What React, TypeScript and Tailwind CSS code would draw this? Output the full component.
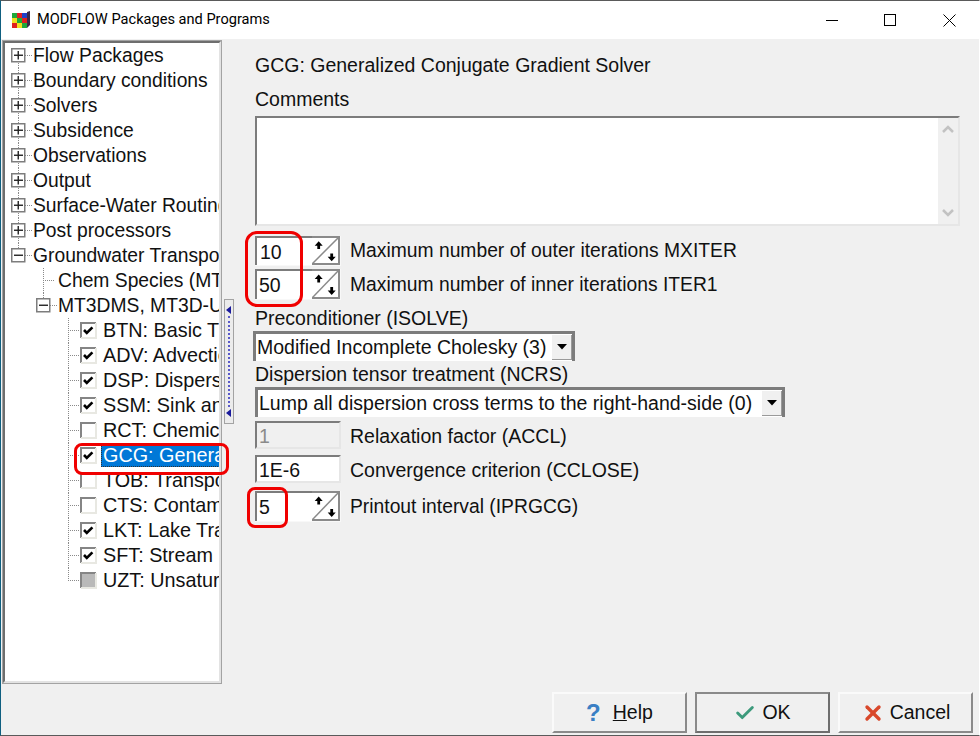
import { Check, X } from 'lucide-react';

type NodeKind = 'plus' | 'minus' | 'leaf';
type CheckState = 'on' | 'off' | 'grey';

const sunken =
    'border-t-2 border-l-2 border-r-2 border-b-2 border-t-[#7c7c7c] border-l-[#7c7c7c] border-r-[#e6e6e6] border-b-[#e6e6e6]';

const topRows: { label: string; kind: NodeKind }[] = [
    { label: 'Flow Packages', kind: 'plus' },
    { label: 'Boundary conditions', kind: 'plus' },
    { label: 'Solvers', kind: 'plus' },
    { label: 'Subsidence', kind: 'plus' },
    { label: 'Observations', kind: 'plus' },
    { label: 'Output', kind: 'plus' },
    { label: 'Surface-Water Routing', kind: 'plus' },
    { label: 'Post processors', kind: 'plus' },
    { label: 'Groundwater Transport', kind: 'minus' },
];

const packageRows: { label: string; state: CheckState; selected?: boolean }[] = [
    { label: 'BTN: Basic Transport', state: 'on' },
    { label: 'ADV: Advection', state: 'on' },
    { label: 'DSP: Dispersion', state: 'on' },
    { label: 'SSM: Sink and Source', state: 'on' },
    { label: 'RCT: Chemical Reactions', state: 'off' },
    { label: 'GCG: Generalized', state: 'on', selected: true },
    { label: 'TOB: Transport Observations', state: 'off' },
    { label: 'CTS: Contaminant', state: 'off' },
    { label: 'LKT: Lake Transport', state: 'on' },
    { label: 'SFT: Stream', state: 'on' },
    { label: 'UZT: Unsaturated Zone', state: 'grey' },
];

function Dots({ x1, y1, x2, y2 }: { x1: number; y1: number; x2: number; y2: number }) {
    return <line x1={x1} y1={y1} x2={x2} y2={y2} stroke="#8a8a8a" strokeWidth="1" strokeDasharray="1 1" />;
}

function ExpandBox({ x, minus }: { x: number; minus: boolean }) {
    return (
        <g>
            <rect x={x + 0.75} y={5.75} width={13} height={13} fill="#fff" stroke="#7d7d7d" strokeWidth="1.5" />
            <line x1={x + 3} y1={12.25} x2={x + 12} y2={12.25} stroke="#222" strokeWidth="1.4" />
            {!minus && <line x1={x + 7.25} y1={8} x2={x + 7.25} y2={16.5} stroke="#222" strokeWidth="1.4" />}
        </g>
    );
}

function TopGutter({ kind, index }: { kind: NodeKind; index: number }) {
    const last = index === topRows.length - 1;
    return (
        <svg width="28" height="25" className="shrink-0">
            <Dots x1={13.5} y1={index === 0 ? 12 : 0} x2={13.5} y2={last ? 6 : 25} />
            <Dots x1={20} y1={12.5} x2={27} y2={12.5} />
            <ExpandBox x={6} minus={kind === 'minus'} />
        </svg>
    );
}

function PackageGutter({ state, last }: { state: CheckState; last: boolean }) {
    return (
        <svg width="96" height="25" className="shrink-0">
            <Dots x1={63.5} y1={0} x2={63.5} y2={last ? 13 : 25} />
            <Dots x1={63} y1={12.5} x2={75} y2={12.5} />
            <path d="M76 20V5h15" fill="none" stroke="#858585" strokeWidth="2" />
            <path d="M91 5v15H76" fill="none" stroke="#e8e8e2" strokeWidth="2" />
            <rect x="77" y="6" width="13" height="13" fill={state === 'grey' ? '#b9b9b9' : '#fff'} />
            {state === 'on' && <path d="M79 12l2.8 3 5.6-5.6" fill="none" stroke="#000" strokeWidth="2.6" />}
        </svg>
    );
}

function Tree() {
    return (
        <div className="w-[220px] h-[644px] border border-[#a3a3a3] shrink-0">
            <div className="h-full border-t-2 border-l-2 border-r-2 border-b-2 border-t-[#6e6e6e] border-l-[#6e6e6e] border-r-[#e3e3e3] border-b-[#e3e3e3] bg-white overflow-hidden text-[19.3px] leading-[23px] text-[#111]">
                {topRows.map((row, i) => (
                    <div key={row.label} className="flex items-center h-[25px] whitespace-nowrap">
                        <TopGutter kind={row.kind} index={i} />
                        <span>{row.label}</span>
                    </div>
                ))}
                <div className="flex items-center h-[25px] whitespace-nowrap">
                    <svg width="53" height="25" className="shrink-0">
                        <Dots x1={38.5} y1={0} x2={38.5} y2={25} />
                        <Dots x1={38} y1={12.5} x2={50} y2={12.5} />
                    </svg>
                    <span>Chem Species (MT3D)</span>
                </div>
                <div className="flex items-center h-[25px] whitespace-nowrap">
                    <svg width="53" height="25" className="shrink-0">
                        <Dots x1={38.5} y1={0} x2={38.5} y2={6} />
                        <Dots x1={45} y1={12.5} x2={52} y2={12.5} />
                        <ExpandBox x={31} minus />
                    </svg>
                    <span>MT3DMS, MT3D-USGS</span>
                </div>
                {packageRows.map((row, i) => (
                    <div key={row.label} className="flex items-center h-[25px] whitespace-nowrap text-[19.8px]">
                        <PackageGutter state={row.state} last={i === packageRows.length - 1} />
                        {row.selected ? (
                            <span className="h-[23px] leading-[23px] px-[2px] bg-[#0078d7] text-white outline-1 outline-dotted outline-[#333] -outline-offset-1">
                                {row.label}
                            </span>
                        ) : (
                            <span className="px-[2px]">{row.label}</span>
                        )}
                    </div>
                ))}
            </div>
        </div>
    );
}

function Splitter() {
    return (
        <div className="ml-[2px] mt-[259px] w-[10px] h-[125px] border border-[#a3a3a3] bg-[#ececec] flex flex-col items-center justify-between py-[6px] shrink-0">
            <svg width="8" height="8"><path d="M6 0v8L1 4z" fill="#1a1a9c" /></svg>
            <div className="flex-1 my-[2px] border-l-2 border-dotted border-[#5a5acb]" />
            <svg width="8" height="8"><path d="M6 0v8L1 4z" fill="#1a1a9c" /></svg>
        </div>
    );
}

function SpinGlyph() {
    return (
        <svg width="28" height="100%" viewBox="0 0 28 30" preserveAspectRatio="none" className="shrink-0 h-full">
            <path d="M0 1h27v28H0" fill="none" stroke="#8a8a8a" strokeWidth="2" />
            <line x1="0" y1="29" x2="27" y2="1" stroke="#8a8a8a" strokeWidth="1.5" />
            <path d="M6.7 5.5l-4 4.5h2.6v3.5h2.8V10h2.6z" fill="#000" />
            <path d="M19.7 26l4-4.5h-2.6V18h-2.8v3.5h-2.6z" fill="#000" />
        </svg>
    );
}

function SpinRow({ value, label, height, pad }: { value: string; label: string; height: string; pad: string }) {
    return (
        <div className={`flex items-center ${height}`}>
            <div className="w-[86px] h-full flex bg-white border-r border-b border-[#f8f8f8]">
                <div className={`flex-1 border-t-2 border-l-2 border-[#7c7c7c] flex items-center text-[19.5px] ${pad}`}>{value}</div>
                <SpinGlyph />
            </div>
            <span className="ml-[9px] text-[19.3px]">{label}</span>
        </div>
    );
}

function Combo({ value, width, shift }: { value: string; width: string; shift: string }) {
    return (
        <div className={`flex h-[30px] bg-white border-t-[3px] border-l-[3px] border-r-[3px] border-t-[#7c7c7c] border-l-[#7c7c7c] border-r-[#7c7c7c] ${width} ${shift}`}>
            <div className="flex-1 pl-[1px] leading-[27px] whitespace-nowrap">{value}</div>
            <div className="w-[20px] h-[25px] mt-[1px] bg-[#f0f0f0] border-r border-b border-[#9a9a9a] flex items-center justify-center">
                <svg width="10" height="6"><path d="M0 0h10L5 5.5z" fill="#000" /></svg>
            </div>
        </div>
    );
}

function Field({ value, label, disabled }: { value: string; label: string; disabled?: boolean }) {
    return (
        <div className="flex items-center h-[28px]">
            <div
                className={`w-[86px] h-full pl-[2px] pt-px flex items-center ${sunken} ${disabled ? 'bg-[#f0f0f0] text-[#8a8a8a]' : 'bg-white'}`}
            >
                {value}
            </div>
            <span className="ml-[9px] pt-px">{label}</span>
        </div>
    );
}

function SolverPanel() {
    return (
        <div className="flex-1 pl-[21px] pt-[13px] text-[19.5px] leading-[22px] text-[#111] flex flex-col">
            <div className="h-[25px] leading-[25px]">GCG: Generalized Conjugate Gradient Solver</div>
            <div className="h-[25px] leading-[25px] mt-[9px]">Comments</div>
            <div className={`w-[705px] h-[110px] mt-[4px] bg-white flex justify-end ${sunken}`}>
                <div className="w-[20px] h-full bg-[#f0f0f0] flex flex-col items-center justify-between py-[7px]">
                    <svg width="12" height="8"><path d="M1 7l5-5 5 5" fill="none" stroke="#c2c2c2" strokeWidth="2.5" /></svg>
                    <svg width="12" height="8"><path d="M1 1l5 5 5-5" fill="none" stroke="#c2c2c2" strokeWidth="2.5" /></svg>
                </div>
            </div>
            <div className="mt-[10px] flex flex-col gap-[3px]">
                <SpinRow value="10" label="Maximum number of outer iterations MXITER" height="h-[30px]" pad="pl-[3px]" />
                <SpinRow value="50" label="Maximum number of inner iterations ITER1" height="h-[31px]" pad="pl-[2px]" />
            </div>
            <div className="h-[25px] leading-[25px] mt-[6px]">Preconditioner (ISOLVE)</div>
            <Combo value="Modified Incomplete Cholesky (3)" width="w-[322px]" shift="-ml-[2px]" />
            <div className="h-[25px] leading-[25px] mt-px">Dispersion tensor treatment (NCRS)</div>
            <Combo value="Lump all dispersion cross terms to the right-hand-side (0)" width="w-[530px]" shift="ml-0" />
            <div className="mt-[4px] flex flex-col gap-[6px]">
                <Field value="1" label="Relaxation factor (ACCL)" disabled />
                <Field value="1E-6" label="Convergence criterion (CCLOSE)" />
            </div>
            <div className="mt-[8px]">
                <SpinRow value="5" label="Printout interval (IPRGCG)" height="h-[31px]" pad="pl-[2px]" />
            </div>
        </div>
    );
}

function DialogButton({ children, active }: { children: React.ReactNode; active?: boolean }) {
    return (
        <button
            className={`w-[135px] h-[41px] pt-px flex items-center justify-center bg-[#f0f0f0] text-[19.5px] text-[#111] border-t-2 border-l-2 border-r-2 border-b-2 ${
                active
                    ? 'border-t-[#8a8a8a] border-l-[#8a8a8a] border-r-[#6e6e6e] border-b-[#6e6e6e]'
                    : 'border-t-[#fafafa] border-l-[#fafafa] border-r-[#8a8a8a] border-b-[#8a8a8a]'
            }`}
        >
            {children}
        </button>
    );
}

export default function App() {
    return (
        <div className="w-[980px] h-[736px] flex flex-col bg-[#f0f0f0] border-t border-t-[#5a5a5a] border-l border-l-[#0f5f80] border-b border-b-[#5a5a5a] border-r border-r-white relative overflow-hidden font-['Liberation_Sans',Arial,sans-serif]">
            <div className="h-[38px] bg-white flex items-center shrink-0">
                <svg width="19" height="18" viewBox="0 0 19 18" className="ml-[11px] shrink-0">
                    <path d="M15 1l3-1v14l-3 3z" fill="#3a2a4a" />
                    <rect x="0" y="2" width="5" height="5" fill="#1fa83a" />
                    <rect x="5" y="2" width="5" height="5" fill="#e02020" />
                    <rect x="10" y="2" width="5" height="5" fill="#2040c8" />
                    <rect x="0" y="7" width="5" height="5" fill="#f0e020" />
                    <rect x="5" y="7" width="5" height="5" fill="#1fa83a" />
                    <rect x="10" y="7" width="5" height="5" fill="#e02020" />
                    <rect x="0" y="12" width="5" height="5" fill="#e02020" />
                    <rect x="5" y="12" width="5" height="5" fill="#f0e020" />
                    <rect x="10" y="12" width="5" height="5" fill="#1fa83a" />
                </svg>
                <span className="ml-[6px] text-[14.6px] text-black font-['Roboto',sans-serif]">MODFLOW Packages and Programs</span>
                <div className="ml-auto flex items-center">
                    <div className="w-[58px] flex justify-center">
                        <svg width="12" height="12"><line x1="0" y1="6.5" x2="12" y2="6.5" stroke="#000" /></svg>
                    </div>
                    <div className="w-[58px] flex justify-center">
                        <svg width="12" height="12"><rect x="0.5" y="0.5" width="11" height="11" fill="none" stroke="#000" /></svg>
                    </div>
                    <div className="w-[60px] flex justify-center">
                        <svg width="13" height="13"><path d="M0.5 0.5l12 12M12.5 0.5l-12 12" fill="none" stroke="#000" /></svg>
                    </div>
                </div>
            </div>
            <div className="flex h-[645px] pt-px pl-px shrink-0">
                <Tree />
                <Splitter />
                <SolverPanel />
            </div>
            <div className="mt-[8px] flex justify-end gap-[8px] pr-[6px]">
                <DialogButton>
                    <span className="font-bold text-[#3a7fc4] text-[24px] leading-none mr-[12px]">?</span>
                    <span><span className="underline">H</span>elp</span>
                </DialogButton>
                <DialogButton active>
                    <Check size={22} strokeWidth={3.2} className="text-[#3d9a7c] mr-[6px]" />
                    <span>OK</span>
                </DialogButton>
                <DialogButton>
                    <X size={24} strokeWidth={3.4} className="text-[#d9482b] mr-[5px]" />
                    <span>Cancel</span>
                </DialogButton>
            </div>
            {/* red annotation marks lying over the dialog */}
            <div className="absolute left-[244px] top-[230px] w-[58px] h-[76px] border-[3px] border-[#f00000] rounded-[12px] pointer-events-none" />
            <div className="absolute left-[73px] top-[442px] w-[155px] h-[32px] border-[3px] border-[#f00000] rounded-[8px] pointer-events-none" />
            <div className="absolute left-[246px] top-[486px] w-[41px] h-[41px] border-[3px] border-[#f00000] rounded-[8px] pointer-events-none" />
        </div>
    );
}
